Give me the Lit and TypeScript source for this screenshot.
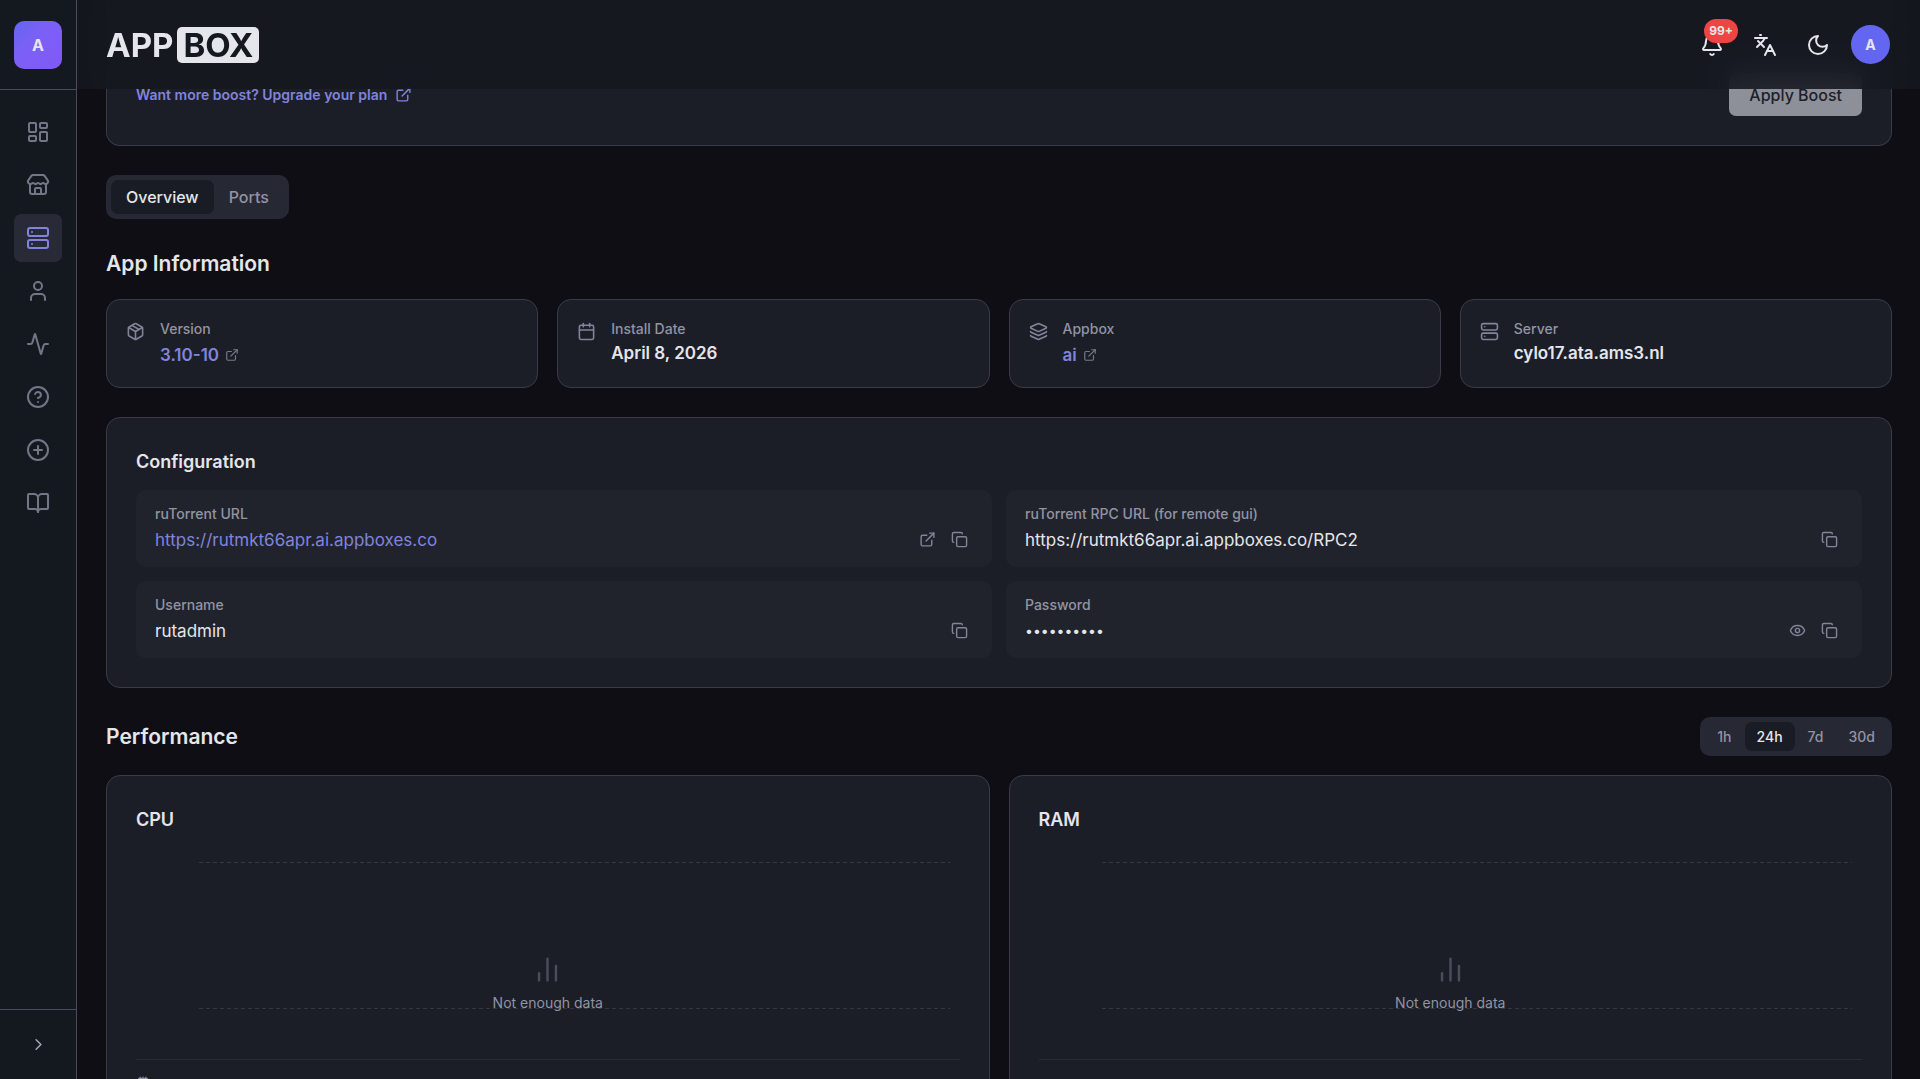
import { LitElement, html, css, svg, nothing, type TemplateResult, type SVGTemplateResult } from "lit";
import { customElement, property, state } from "lit/decorators.js";
import { classMap } from "lit/directives/class-map.js";

const ICONS: Record<string, SVGTemplateResult> = {
  dashboard: svg`<rect width="7" height="9" x="3" y="3" rx="1"/><rect width="7" height="5" x="14" y="3" rx="1"/><rect width="7" height="9" x="14" y="12" rx="1"/><rect width="7" height="5" x="3" y="16" rx="1"/>`,
  store: svg`<path d="M15 21v-5a1 1 0 0 0-1-1h-4a1 1 0 0 0-1 1v5"/><path d="M17.774 10.31a1.12 1.12 0 0 0-1.549 0 2.5 2.5 0 0 1-3.451 0 1.12 1.12 0 0 0-1.548 0 2.5 2.5 0 0 1-3.452 0 1.12 1.12 0 0 0-1.549 0 2.5 2.5 0 0 1-3.77-3.248l2.889-4.184A2 2 0 0 1 7 2h10a2 2 0 0 1 1.653.873l2.895 4.192a2.5 2.5 0 0 1-3.774 3.244"/><path d="M4 10.95V19a2 2 0 0 0 2 2h12a2 2 0 0 0 2-2v-8.05"/>`,
  server: svg`<rect width="20" height="8" x="2" y="2" rx="2"/><rect width="20" height="8" x="2" y="14" rx="2"/><path d="M6 6h.01M6 18h.01"/>`,
  user: svg`<path d="M19 21v-2a4 4 0 0 0-4-4H9a4 4 0 0 0-4 4v2"/><circle cx="12" cy="7" r="4"/>`,
  activity: svg`<path d="M22 12h-2.48a2 2 0 0 0-1.93 1.46l-2.35 8.36a.25.25 0 0 1-.48 0L9.24 2.18a.25.25 0 0 0-.48 0l-2.35 8.36A2 2 0 0 1 4.49 12H2"/>`,
  help: svg`<circle cx="12" cy="12" r="10"/><path d="M9.09 9a3 3 0 0 1 5.83 1c0 2-3 3-3 3"/><path d="M12 17h.01"/>`,
  plus: svg`<circle cx="12" cy="12" r="10"/><path d="M8 12h8M12 8v8"/>`,
  book: svg`<path d="M12 7v14"/><path d="M3 18a1 1 0 0 1-1-1V4a1 1 0 0 1 1-1h5a4 4 0 0 1 4 4 4 4 0 0 1 4-4h5a1 1 0 0 1 1 1v13a1 1 0 0 1-1 1h-6a3 3 0 0 0-3 3 3 3 0 0 0-3-3z"/>`,
  chevron: svg`<path d="m9 18 6-6-6-6"/>`,
  bell: svg`<path d="M10.268 21a2 2 0 0 0 3.464 0"/><path d="M3.262 15.326A1 1 0 0 0 4 17h16a1 1 0 0 0 .74-1.673C19.41 13.956 18 12.499 18 8A6 6 0 0 0 6 8c0 4.499-1.411 5.956-2.738 7.326"/>`,
  languages: svg`<path d="m5 8 6 6"/><path d="m4 14 6-6 2-3"/><path d="M2 5h12"/><path d="M7 2h1"/><path d="m22 22-5-10-5 10"/><path d="M14 18h6"/>`,
  moon: svg`<path d="M12 3a6 6 0 0 0 9 9 9 9 0 1 1-9-9Z"/>`,
  external: svg`<path d="M15 3h6v6"/><path d="M10 14 21 3"/><path d="M18 13v6a2 2 0 0 1-2 2H5a2 2 0 0 1-2-2V8a2 2 0 0 1 2-2h6"/>`,
  package: svg`<path d="M11 21.73a2 2 0 0 0 2 0l7-4A2 2 0 0 0 21 16V8a2 2 0 0 0-1-1.73l-7-4a2 2 0 0 0-2 0l-7 4A2 2 0 0 0 3 8v8a2 2 0 0 0 1 1.73z"/><path d="M12 22V12"/><path d="m3.3 7 8.7 5 8.7-5"/><path d="m7.5 4.27 9 5.15"/>`,
  calendar: svg`<path d="M8 2v4M16 2v4"/><rect width="18" height="18" x="3" y="4" rx="2"/><path d="M3 10h18"/>`,
  layers: svg`<path d="M12.83 2.18a2 2 0 0 0-1.66 0L2.6 6.08a1 1 0 0 0 0 1.83l8.58 3.91a2 2 0 0 0 1.66 0l8.58-3.9a1 1 0 0 0 0-1.83z"/><path d="M2 12a1 1 0 0 0 .58.91l8.6 3.91a2 2 0 0 0 1.65 0l8.58-3.9A1 1 0 0 0 22 12"/><path d="M2 17a1 1 0 0 0 .58.91l8.6 3.91a2 2 0 0 0 1.65 0l8.58-3.9A1 1 0 0 0 22 17"/>`,
  copy: svg`<rect width="14" height="14" x="8" y="8" rx="2"/><path d="M4 16c-1.1 0-2-.9-2-2V4c0-1.1.9-2 2-2h10c1.1 0 2 .9 2 2"/>`,
  eye: svg`<path d="M2.062 12.348a1 1 0 0 1 0-.696 10.75 10.75 0 0 1 19.876 0 1 1 0 0 1 0 .696 10.75 10.75 0 0 1-19.876 0"/><circle cx="12" cy="12" r="3"/>`,
  bars: svg`<path d="M5 21v-6M12 21V3M19 21V9"/>`,
  cpu: svg`<path d="M12 20v2M12 2v2M17 20v2M17 2v2M2 12h2M2 17h2M2 7h2M20 12h2M20 17h2M20 7h2M7 20v2M7 2v2"/><rect x="4" y="4" width="16" height="16" rx="2"/><rect x="8" y="8" width="8" height="8" rx="1"/>`,
};

@customElement("ui-icon")
export class UiIcon extends LitElement {
  @property() name = "";

  static styles = css`
    :host {
      display: block;
      flex: none;
      width: 24px;
      height: 24px;
    }
    svg {
      display: block;
      width: 100%;
      height: 100%;
      fill: none;
      stroke: currentColor;
      stroke-width: 2;
      stroke-linecap: round;
      stroke-linejoin: round;
    }
  `;

  render() {
    return html`<svg viewBox="0 0 24 24" aria-hidden="true">${ICONS[this.name] ?? nothing}</svg>`;
  }
}

interface InfoItem {
  icon: string;
  label: string;
  value: string;
  link?: boolean;
}

interface ConfigItem {
  label: string;
  value: string;
  link?: boolean;
  secret?: boolean;
}

const NAV = [
  { icon: "dashboard", label: "Dashboard" },
  { icon: "store", label: "App store" },
  { icon: "server", label: "Appboxes" },
  { icon: "user", label: "Account" },
  { icon: "activity", label: "Status" },
  { icon: "help", label: "Support" },
  { icon: "plus", label: "New appbox" },
  { icon: "book", label: "Documentation" },
];

const INFO: InfoItem[] = [
  { icon: "package", label: "Version", value: "3.10-10", link: true },
  { icon: "calendar", label: "Install Date", value: "April 8, 2026" },
  { icon: "layers", label: "Appbox", value: "ai", link: true },
  { icon: "server", label: "Server", value: "cylo17.ata.ams3.nl" },
];

const CONFIG: ConfigItem[] = [
  { label: "ruTorrent URL", value: "https://rutmkt66apr.ai.appboxes.co", link: true },
  { label: "ruTorrent RPC URL (for remote gui)", value: "https://rutmkt66apr.ai.appboxes.co/RPC2" },
  { label: "Username", value: "rutadmin" },
  { label: "Password", value: "••••••••••", secret: true },
];

@customElement("app-root")
export class AppRoot extends LitElement {
  @state() private tab = "Overview";
  @state() private range = "24h";

  static styles = css`
    :host {
      --page: #0f0e14;
      --chrome: #14181f;
      --card: #1c1e27;
      --inset: #21232c;
      --raised: #262834;
      --line: #393b49;
      --rule: #4a4b59;
      --text: #e5e6eb;
      --muted: #9294a4;
      --link: #8084dd;
      display: block;
      color: var(--text);
      background: var(--page);
      font-family: Inter, "Liberation Sans", sans-serif;
      font-size: 17px;
      line-height: 24px;
      -webkit-font-smoothing: antialiased;
    }
    * {
      box-sizing: border-box;
    }
    h2, h3, p {
      margin: 0;
    }
    button {
      font: inherit;
      color: inherit;
      background: none;
      border: 0;
      padding: 0;
      cursor: pointer;
    }
    a {
      color: var(--link);
      text-decoration: none;
    }
    .shell {
      display: grid;
      grid-template-columns: 77px minmax(0, 1fr);
      height: 100vh;
      overflow: hidden;
    }

    /* Sidebar */
    .sidebar {
      display: flex;
      flex-direction: column;
      background: var(--chrome);
      border-right: 1px solid var(--rule);
      min-height: 0;
    }
    .side-top {
      display: grid;
      place-items: center;
      height: 90px;
      border-bottom: 1px solid var(--rule);
    }
    .team {
      display: grid;
      place-items: center;
      width: 48px;
      height: 48px;
      border-radius: 10px;
      background: linear-gradient(135deg, #6366f1, #7c60f6 40%, #8059f6);
      font-size: 16px;
      font-weight: 700;
    }
    .nav {
      flex: 1;
      display: flex;
      flex-direction: column;
      align-items: center;
      gap: 5px;
      padding-top: 18px;
    }
    .nav-link {
      display: grid;
      place-items: center;
      width: 48px;
      height: 48px;
      border-radius: 7px;
      color: #737687;
    }
    .nav-link.active {
      background: #292a37;
      color: var(--link);
    }
    .side-bottom {
      display: grid;
      place-items: center;
      height: 70px;
      border-top: 1px solid var(--rule);
      color: #a3a5b3;
    }
    .expand {
      display: grid;
      place-items: center;
      width: 48px;
      height: 48px;
    }
    .expand ui-icon {
      width: 19px;
      height: 19px;
    }

    /* Header */
    .main {
      min-width: 0;
      height: 100vh;
      overflow: hidden;
    }
    .header {
      position: sticky;
      top: 0;
      z-index: 2;
      display: flex;
      align-items: center;
      justify-content: space-between;
      height: 89px;
      padding: 0 28px 0 29px;
      background: rgba(20, 24, 31, 0.88);
      backdrop-filter: blur(14px);
    }
    .brand {
      display: flex;
      align-items: center;
      gap: 4px;
      color: var(--text);
      font-size: 33px;
      line-height: 36px;
      font-weight: 700;
    }
    .brand-box {
      padding: 0 6px;
      border-radius: 5px;
      background: var(--text);
      color: #14181f;
    }
    .tools {
      display: flex;
      gap: 10px;
    }
    .tool {
      position: relative;
      display: grid;
      place-items: center;
      width: 43px;
      height: 43px;
    }
    .badge {
      position: absolute;
      top: -4px;
      right: -5px;
      min-width: 34px;
      border-radius: 12px;
      background: #ef4444;
      font-size: 12px;
      line-height: 24px;
      font-weight: 700;
      text-align: center;
    }
    .avatar {
      display: grid;
      place-items: center;
      width: 39px;
      height: 39px;
      border-radius: 50%;
      background: #6366f1;
      font-size: 14px;
      font-weight: 700;
    }

    /* Content, scrolled under the header */
    .content {
      display: flex;
      flex-direction: column;
      margin-top: -89px;
      padding: 0 28px 29px 29px;
    }
    .card {
      background: var(--card);
      border: 1px solid var(--line);
      border-radius: 14px;
      padding: 29px;
    }
    .boost {
      display: flex;
      align-items: center;
      justify-content: space-between;
      border-top: 0;
      border-radius: 0 0 14px 14px;
      padding-top: 73px;
    }
    .upgrade {
      display: flex;
      align-items: center;
      gap: 8px;
      font-size: 14px;
      font-weight: 600;
    }
    .small ui-icon, .upgrade ui-icon {
      width: 17px;
      height: 17px;
    }
    .apply {
      height: 43px;
      padding: 0 20px;
      border-radius: 7px;
      background: #8e9099;
      color: #1c1e2a;
      font-size: 16px;
      font-weight: 500;
    }
    .segments {
      display: flex;
      padding: 5px;
      border-radius: 10px;
      background: var(--raised);
      color: var(--muted);
      font-weight: 500;
    }
    .segment {
      border-radius: 7px;
    }
    .segment.active {
      background: #1a1c25;
      color: var(--text);
    }
    .tabs {
      align-self: flex-start;
      margin-top: 29px;
      font-size: 16px;
    }
    .tabs .segment {
      height: 34px;
      padding: 0 15px;
    }
    .title {
      font-size: 21px;
      line-height: 33px;
      font-weight: 600;
    }
    .info-title {
      margin-top: 28px;
    }
    .info {
      display: grid;
      grid-template-columns: repeat(4, minmax(0, 1fr));
      gap: 19px;
      margin-top: 19px;
    }
    .info-card {
      display: flex;
      gap: 15px;
      padding: 19px;
    }
    .info-card > ui-icon {
      width: 19px;
      height: 19px;
      margin-top: 3px;
      color: #82849a;
    }
    .stack {
      display: flex;
      flex-direction: column;
      gap: 2px;
      min-width: 0;
    }
    .label {
      color: var(--muted);
      font-size: 14px;
      line-height: 20px;
      font-weight: 500;
    }
    .strong {
      font-weight: 600;
    }
    .value-link {
      display: flex;
      align-items: center;
      gap: 6px;
      height: 27px;
    }
    .value-link ui-icon {
      width: 14px;
      height: 14px;
      color: #777989;
    }
    .config {
      margin-top: 29px;
    }
    .subtitle {
      font-size: 18px;
      line-height: 29px;
      font-weight: 600;
    }
    .fields {
      display: grid;
      grid-template-columns: repeat(2, minmax(0, 1fr));
      gap: 14px;
      margin-top: 14px;
    }
    .field {
      padding: 14px 19px;
      border-radius: 10px;
      background: var(--inset);
    }
    .row {
      display: flex;
      align-items: center;
      justify-content: space-between;
      height: 27px;
      margin-top: 2px;
    }
    .secret {
      font-size: 14px;
    }
    .actions {
      display: flex;
      gap: 5px;
      color: #82849a;
    }
    .action {
      display: grid;
      place-items: center;
      width: 27px;
      height: 27px;
      color: inherit;
    }
    .perf-head {
      display: flex;
      align-items: center;
      justify-content: space-between;
      margin-top: 29px;
    }
    .range {
      gap: 1px;
      font-size: 14px;
      line-height: 20px;
    }
    .range .segment {
      height: 29px;
      padding: 0 12px;
    }
    .charts {
      display: grid;
      grid-template-columns: repeat(2, minmax(0, 1fr));
      gap: 19px;
      margin-top: 19px;
    }
    .chart {
      position: relative;
      display: flex;
      flex-direction: column;
      justify-content: space-between;
      height: 225px;
      padding: 28px 10px 50px 63px;
    }
    .gridline {
      height: 1px;
      background: repeating-linear-gradient(90deg, #343644 0 4px, transparent 4px 7px);
    }
    .empty {
      position: absolute;
      inset: 0;
      display: flex;
      flex-direction: column;
      align-items: center;
      justify-content: center;
      gap: 9px;
      padding-top: 75px;
      color: var(--muted);
      font-size: 14px;
      line-height: 20px;
    }
    .empty ui-icon {
      width: 29px;
      height: 29px;
      color: #4b4d5d;
    }
    .chart-foot {
      height: 60px;
      padding-top: 16px;
      border-top: 1px solid #292b37;
      color: var(--muted);
    }
    .chart-foot ui-icon {
      width: 14px;
      height: 14px;
    }
  `;

  private renderSegments(items: string[], active: string, pick: (v: string) => void): TemplateResult[] {
    return items.map(
      (item) => html`<button
        class=${classMap({ segment: true, active: item === active })}
        aria-pressed=${item === active ? "true" : "false"}
        @click=${() => pick(item)}
      >${item}</button>`,
    );
  }

  private renderInfo(item: InfoItem) {
    return html`<div class="card info-card">
      <ui-icon name=${item.icon}></ui-icon>
      <div class="stack">
        <span class="label">${item.label}</span>
        ${item.link
          ? html`<a class="strong value-link" href="#">${item.value}<ui-icon name="external"></ui-icon></a>`
          : html`<span class="strong">${item.value}</span>`}
      </div>
    </div>`;
  }

  private renderField(item: ConfigItem) {
    return html`<div class="field">
      <div class="label">${item.label}</div>
      <div class="row">
        ${item.link
          ? html`<a href=${item.value}>${item.value}</a>`
          : html`<span class=${classMap({ secret: !!item.secret })}>${item.value}</span>`}
        <div class="actions small">
          ${item.link
            ? html`<a class="action" href=${item.value} aria-label="Open"><ui-icon name="external"></ui-icon></a>`
            : nothing}
          ${item.secret
            ? html`<button class="action" aria-label="Show"><ui-icon name="eye"></ui-icon></button>`
            : nothing}
          <button class="action" aria-label="Copy"><ui-icon name="copy"></ui-icon></button>
        </div>
      </div>
    </div>`;
  }

  private renderChart(name: string, icon?: string) {
    return html`<section class="card">
      <h3 class="subtitle">${name}</h3>
      <div class="chart">
        <div class="gridline"></div>
        <div class="gridline"></div>
        <div class="empty"><ui-icon name="bars"></ui-icon><p>Not enough data</p></div>
      </div>
      <div class="chart-foot">${icon ? html`<ui-icon name=${icon}></ui-icon>` : nothing}</div>
    </section>`;
  }

  render() {
    return html`<div class="shell">
      <aside class="sidebar">
        <div class="side-top"><button class="team">A</button></div>
        <nav class="nav">
          ${NAV.map(
            (n) => html`<a
              class=${classMap({ "nav-link": true, active: n.icon === "server" })}
              href="#"
              aria-label=${n.label}
            ><ui-icon name=${n.icon}></ui-icon></a>`,
          )}
        </nav>
        <div class="side-bottom">
          <button class="expand" aria-label="Expand sidebar"><ui-icon name="chevron"></ui-icon></button>
        </div>
      </aside>
      <div class="main">
        <header class="header">
          <a class="brand" href="#"><span>APP</span><span class="brand-box">BOX</span></a>
          <div class="tools">
            <button class="tool" aria-label="Notifications">
              <ui-icon name="bell"></ui-icon><span class="badge">99+</span>
            </button>
            <button class="tool" aria-label="Language"><ui-icon name="languages"></ui-icon></button>
            <button class="tool" aria-label="Theme"><ui-icon name="moon"></ui-icon></button>
            <button class="tool" aria-label="Account"><span class="avatar">A</span></button>
          </div>
        </header>
        <main class="content">
          <section class="card boost">
            <a class="upgrade" href="#">Want more boost? Upgrade your plan<ui-icon name="external"></ui-icon></a>
            <button class="apply" disabled>Apply Boost</button>
          </section>
          <div class="segments tabs">
            ${this.renderSegments(["Overview", "Ports"], this.tab, (v) => (this.tab = v))}
          </div>
          <h2 class="title info-title">App Information</h2>
          <div class="info">${INFO.map((i) => this.renderInfo(i))}</div>
          <section class="card config">
            <h3 class="subtitle">Configuration</h3>
            <div class="fields">${CONFIG.map((c) => this.renderField(c))}</div>
          </section>
          <div class="perf-head">
            <h2 class="title">Performance</h2>
            <div class="segments range">
              ${this.renderSegments(["1h", "24h", "7d", "30d"], this.range, (v) => (this.range = v))}
            </div>
          </div>
          <div class="charts">${this.renderChart("CPU", "cpu")}${this.renderChart("RAM")}</div>
        </main>
      </div>
    </div>`;
  }
}
